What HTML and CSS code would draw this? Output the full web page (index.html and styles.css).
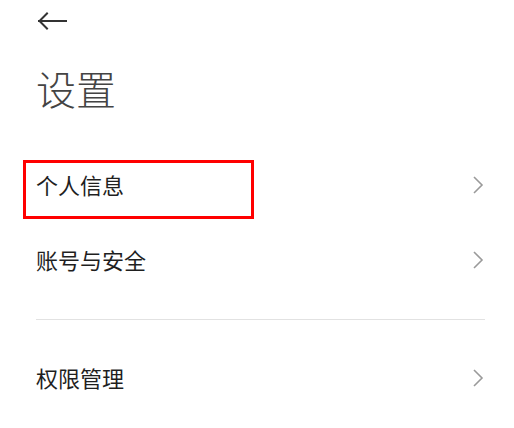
FILE: index.html
```html
<!DOCTYPE html>
<html lang="zh-CN">
<head>
<meta charset="utf-8">
<title>设置</title>
<link rel="stylesheet" href="styles.css">
</head>
<body>
<div class="page">
  <header class="topbar">
    <button class="back" aria-label="返回">
      <svg width="30" height="18" viewBox="0 0 30 18"><path d="M2 9 H29 M10 1.5 L2.5 9 L10 16.5" fill="none" stroke="#333" stroke-width="2" stroke-linecap="square"/></svg>
    </button>
  </header>
  <h1 class="title">设置</h1>
  <ul class="group first">
    <li class="item">
      <span class="highlight"></span>
      <span class="label">个人信息</span>
      <svg class="chev" width="12" height="18" viewBox="0 0 12 18"><path d="M2 1 L10 9 L2 17" fill="none" stroke="#9a9a9a" stroke-width="1.6"/></svg>
    </li>
    <li class="item">
      <span class="label">账号与安全</span>
      <svg class="chev" width="12" height="18" viewBox="0 0 12 18"><path d="M2 1 L10 9 L2 17" fill="none" stroke="#9a9a9a" stroke-width="1.6"/></svg>
    </li>
  </ul>
  <hr class="divider">
  <ul class="group">
    <li class="item">
      <span class="label">权限管理</span>
      <svg class="chev" width="12" height="18" viewBox="0 0 12 18"><path d="M2 1 L10 9 L2 17" fill="none" stroke="#9a9a9a" stroke-width="1.6"/></svg>
    </li>
  </ul>
</div>
</body>
</html>
```

FILE: styles.css
```css
* { box-sizing: border-box; }
html, body { margin: 0; padding: 0; background: #fff; }
body {
  font-family: "Noto Sans CJK SC", "Noto Sans", sans-serif;
  color: #222;
}
.page {
  padding: 0 29px 0 36px;
}
.topbar {
  height: 40px;
  display: flex;
  align-items: flex-start;
  padding-top: 12px;
}
.back {
  border: 0;
  background: none;
  padding: 0;
  margin-left: 1px;
  display: block;
  line-height: 0;
}
.title {
  margin: 24px 0 0;
  font-size: 40px;
  line-height: 48px;
  font-weight: 300;
  color: #444;
}
.group {
  list-style: none;
  margin: 0;
  padding: 0;
}
.group.first { margin-top: 35px; }
.item {
  position: relative;
  height: 75px;
  display: flex;
  align-items: center;
  justify-content: space-between;
  font-size: 22px;
  line-height: 28px;
}
.label { color: #1f1f1f; padding-bottom: 2px; }
.chev { margin-right: 1px; display: block; }
.highlight {
  position: absolute;
  left: -13px;
  top: 13px;
  width: 231px;
  height: 59px;
  border: 3px solid #ff0000;
}
.divider {
  border: 0;
  height: 1px;
  background: #e2e2e2;
  margin: 22px 0 20px;
}
```
